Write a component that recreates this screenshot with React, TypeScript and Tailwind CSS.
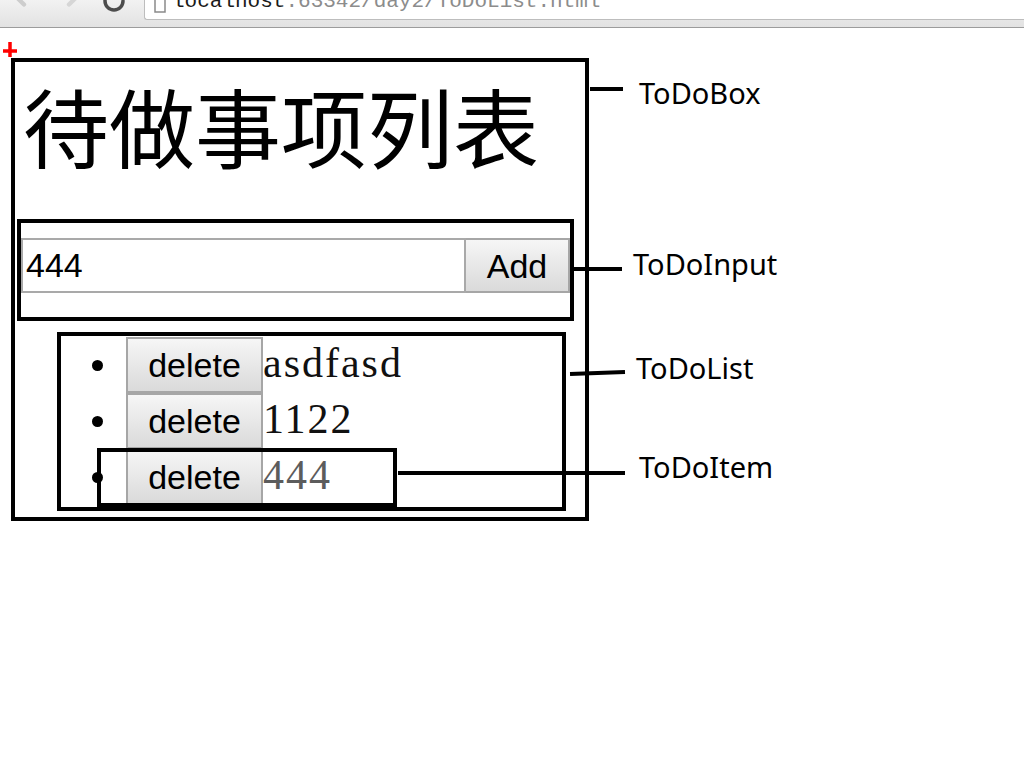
import { ArrowLeft, ArrowRight, RotateCw } from 'lucide-react';

const items = [
    { id: 1, text: 'asdfasd', tone: 'text-[#111]' },
    { id: 2, text: '1122', tone: 'text-[#111]' },
    { id: 3, text: '444', tone: 'text-[#5c5c5c]' },
];

const btn =
    'h-[56px] w-[137px] shrink-0 border-2 border-[#a6a6a6] bg-gradient-to-b from-[#f6f6f6] to-[#dadada] font-["Liberation_Sans",Arial,sans-serif] text-[34px] leading-none text-black';

function BrowserBar() {
    return (
        <div className="flex h-[28px] overflow-hidden border-b border-[#9c9c9c] bg-gradient-to-b from-[#f2f2f2] to-[#e2e2e2]">
            <ArrowLeft size={26} strokeWidth={4} className="-mt-[16px] ml-[11px] text-[#cdcdcd]" />
            <ArrowRight size={26} strokeWidth={4} className="-mt-[16px] ml-[19px] text-[#d6d6d6]" />
            <RotateCw size={24} strokeWidth={3.5} className="-mt-[11px] ml-[20px] text-[#4d4d4d]" />
            <div className="ml-[18px] flex h-[20px] flex-1 items-start rounded-bl-[3px] border-b border-l border-[#bdbdbd] bg-white">
                <svg width="12" height="14" viewBox="0 0 12 14" className="ml-[9px] -mt-[1px]">
                    <path d="M1 0 V13 H11 V0" fill="none" stroke="#8a8a8a" strokeWidth="1.5" />
                </svg>
                <span className="-mt-[9px] ml-[6px] font-['Liberation_Mono',monospace] text-[21px] leading-none text-[#8c8c8c]">
                    <span className="text-[#1a1a1a]">localhost</span>:63342/day2/ToDoList.html
                </span>
            </div>
        </div>
    );
}

function ToDoInput() {
    return (
        <div className="ml-[2px] mt-[51px] w-[557px] border-4 border-black px-0 pb-[24px] pt-[15px]">
            <div className="flex h-[55px]">
                <input
                    readOnly
                    value="444"
                    className="h-full min-w-0 flex-1 border-2 border-[#a9a9a9] bg-white px-[3px] font-['Liberation_Sans',Arial,sans-serif] text-[34px] text-black outline-none"
                />
                <button type="button" className={`${btn} !h-[55px] !w-[104px] border-l-0`}>
                    Add
                </button>
            </div>
        </div>
    );
}

function ToDoList() {
    return (
        <ul className="ml-[42px] mt-[11px] h-[179px] w-[509px] border-4 border-black pt-[1px]">
            {items.map((item) => (
                <li key={item.id} className="flex h-[56px] items-baseline">
                    <span className="ml-[31px] mr-[23px] h-[11px] w-[11px] shrink-0 self-center rounded-full bg-black" />
                    <button type="button" className={btn}>
                        delete
                    </button>
                    <span className={`font-['Liberation_Serif','Times_New_Roman',serif] text-[42px] leading-none tracking-[2px] ${item.tone}`}>
                        {item.text}
                    </span>
                </li>
            ))}
        </ul>
    );
}

function Label({ text, className }: { text: string; className: string }) {
    return (
        <span className={`absolute font-['Noto_Sans',sans-serif] text-[29px] leading-none text-black ${className}`}>
            {text}
        </span>
    );
}

export default function App() {
    return (
        <div className="relative h-[768px] w-[1024px] overflow-hidden bg-white">
            <BrowserBar />

            <div className="ml-[11px] mt-[30px] h-[463px] w-[578px] border-4 border-black">
                <h1 className="ml-[8px] mt-[20px] font-['Noto_Sans_CJK_SC',sans-serif] text-[86px] font-normal leading-none text-black">
                    待做事项列表
                </h1>
                <ToDoInput />
                <ToDoList />
            </div>

            {/* annotations */}
            <svg width="15" height="16" viewBox="0 0 15 16" className="absolute left-[3px] top-[42px]">
                <path d="M0 9 H14 M7 0 V15" stroke="#ff0000" strokeWidth="3.5" />
            </svg>
            <div className="absolute left-[97px] top-[448px] h-[59px] w-[300px] border-[4px] border-black" />
            <div className="absolute left-[590px] top-[87px] h-[4px] w-[33px] bg-black" />
            <div className="absolute left-[574px] top-[267px] h-[4px] w-[48px] bg-black" />
            <div className="absolute left-[570px] top-[371px] h-[4px] w-[55px] -rotate-2 bg-black" />
            <div className="absolute left-[398px] top-[471px] h-[4px] w-[227px] bg-black" />

            <Label text="ToDoBox" className="left-[639px] top-[78px]" />
            <Label text="ToDoInput" className="left-[633px] top-[249px]" />
            <Label text="ToDoList" className="left-[636px] top-[353px]" />
            <Label text="ToDoItem" className="left-[639px] top-[452px]" />
        </div>
    );
}
